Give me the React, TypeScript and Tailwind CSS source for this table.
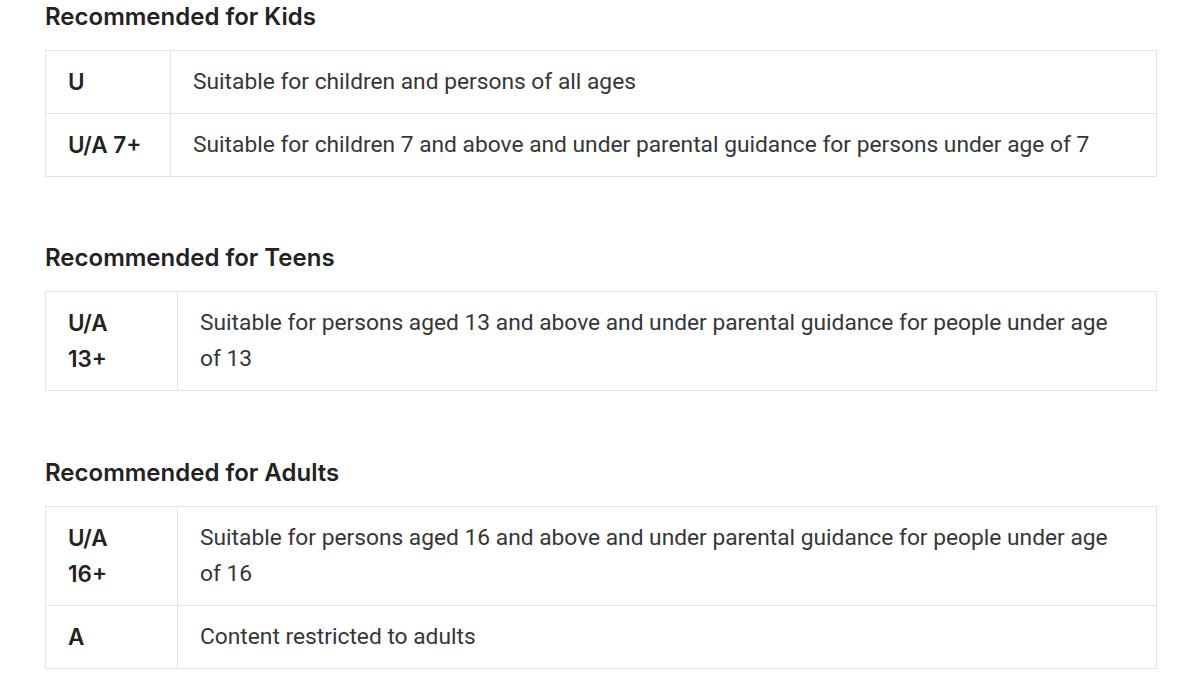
import React from 'react';

type Row = { label: React.ReactNode; text: string };
type Group = { title: string; labelWidth: string; gap: string; rows: Row[] };

const groups: Group[] = [
  {
    title: 'Recommended for Kids',
    labelWidth: 'w-[125px]',
    gap: '',
    rows: [
      { label: 'U', text: 'Suitable for children and persons of all ages' },
      { label: 'U/A 7+', text: 'Suitable for children 7 and above and under parental guidance for persons under age of 7' },
    ],
  },
  {
    title: 'Recommended for Teens',
    labelWidth: 'w-[132px]',
    gap: 'mt-[66px]',
    rows: [
      {
        label: (
          <>
            U/A
            <br />
            13+
          </>
        ),
        text: 'Suitable for persons aged 13 and above and under parental guidance for people under age of 13',
      },
    ],
  },
  {
    title: 'Recommended for Adults',
    labelWidth: 'w-[132px]',
    gap: 'mt-[67px]',
    rows: [
      {
        label: (
          <>
            U/A
            <br />
            16+
          </>
        ),
        text: 'Suitable for persons aged 16 and above and under parental guidance for people under age of 16',
      },
      { label: 'A', text: 'Content restricted to adults' },
    ],
  },
];

export default function App() {
  return (
    <div className="w-[1200px] h-[675px] overflow-hidden bg-white pl-[45px] pr-[43px] pt-[2px]">
      {groups.map((g) => (
        <section key={g.title} className={g.gap}>
          <h2 className="font-['Inter',sans-serif] font-semibold text-[24px] leading-[30px] text-[#222] mb-[18px]">
            {g.title}
          </h2>
          <div className="border border-[#e3e3e3]">
            {g.rows.map((r, j) => (
              <div key={j} className={'flex ' + (j > 0 ? 'border-t border-[#e3e3e3]' : '')}>
                <div
                  className={
                    g.labelWidth +
                    " shrink-0 border-r border-[#e3e3e3] px-[22px] pt-[13px] pb-[13px] font-['Inter',sans-serif] font-semibold text-[22.5px] leading-[36px] text-[#222]"
                  }
                >
                  {r.label}
                </div>
                <div className="flex-1 pl-[22px] pr-[30px] pt-[13px] pb-[13px] font-['Roboto',sans-serif] text-[22.75px] leading-[36px] text-[#363636]">
                  {r.text}
                </div>
              </div>
            ))}
          </div>
        </section>
      ))}
    </div>
  );
}
